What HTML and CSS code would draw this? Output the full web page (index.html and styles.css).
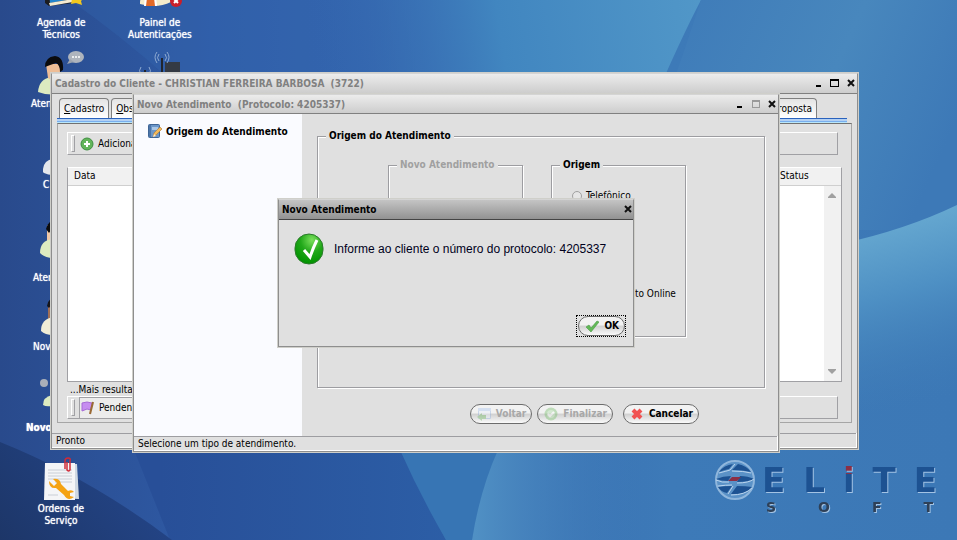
FILE: index.html
```
<!DOCTYPE html>
<html lang="pt-BR">
<head>
<meta charset="utf-8">
<title>Cadastro do Cliente</title>
<link rel="stylesheet" href="styles.css">
</head>
<body>
<svg class="wallpaper" viewBox="0 0 957 540" preserveAspectRatio="none" aria-hidden="true">
  <defs>
    <linearGradient id="base" x1="0" y1="0" x2="1" y2="0"><stop offset="0" stop-color="#294a8c"/><stop offset=".22" stop-color="#2f5ba6"/><stop offset=".42" stop-color="#3466ae"/><stop offset=".7" stop-color="#3d7ab8"/><stop offset="1" stop-color="#3c78b6"/></linearGradient>
    <linearGradient id="beam" x1="300" y1="60" x2="700" y2="0" gradientUnits="userSpaceOnUse"><stop offset="0" stop-color="#3361ad" stop-opacity="0"/><stop offset=".5" stop-color="#4186c0"/><stop offset="1" stop-color="#5197c8"/></linearGradient>
    <linearGradient id="topright" x1="690" y1="0" x2="957" y2="120" gradientUnits="userSpaceOnUse"><stop offset="0" stop-color="#3f7cb9"/><stop offset=".55" stop-color="#4887bd"/><stop offset="1" stop-color="#3d79b7"/></linearGradient>
    <linearGradient id="wave" x1="890" y1="215" x2="940" y2="400" gradientUnits="userSpaceOnUse"><stop offset="0" stop-color="#68aad1"/><stop offset=".4" stop-color="#4e90c4"/><stop offset="1" stop-color="#3e7bb6" stop-opacity="0"/></linearGradient>
    <linearGradient id="corner" x1="0" y1="540" x2="130" y2="440" gradientUnits="userSpaceOnUse"><stop offset="0" stop-color="#1d3668"/><stop offset="1" stop-color="#24468a"/></linearGradient>
    <linearGradient id="low" x1="160" y1="0" x2="450" y2="0" gradientUnits="userSpaceOnUse"><stop offset="0" stop-color="#284f98"/><stop offset="1" stop-color="#2c5ea6"/></linearGradient>
    <linearGradient id="ray" x1="475" y1="0" x2="660" y2="0" gradientUnits="userSpaceOnUse"><stop offset="0" stop-color="#5090c4"/><stop offset="1" stop-color="#3b77b5" stop-opacity="0"/></linearGradient>
  </defs>
  <rect width="957" height="540" fill="url(#base)"/>
  <path d="M70 0Q240 120 360 300H560V0Z" fill="#356bb4" opacity=".3"/>
  <path d="M300 0H701Q680 40 650 110H300Z" fill="url(#beam)"/>
  <path d="M701 0H957V230H620Q672 90 701 0Z" fill="url(#topright)"/>
  <path d="M840 244Q905 230 957 205V430H840Z" fill="url(#wave)"/>
  <path d="M130 440H420Q425 500 446 540H170Z" fill="url(#low)"/>
  <path d="M400 450H498Q480 500 472 540H446Q420 495 400 450Z" fill="#3775b4"/>
  <path d="M498 450H720V540H472Q480 490 498 450Z" fill="url(#ray)"/>
  <path d="M0 442Q90 478 172 540H0Z" fill="url(#corner)"/>
</svg>

<nav class="shortcuts" aria-label="Atalhos">
  <a class="shortcut agenda" href="#">
    <svg width="48" height="48" viewBox="0 0 48 48"><path d="M8 8h28v35l-24 3-4-3z" fill="#1c1c20"/><path d="M10 8h26v31l-23 4z" fill="#2284cd"/><path d="M12 43l24-4v3l-23 4z" fill="#f3ead2"/><path d="M39 31l3 6 6 0-4 4 1 4-6-2-5 1 1-5-4-3 6-1z" fill="#f2c81e"/></svg>
    <span>Agenda de<br>Técnicos</span></a>
  <a class="shortcut painel" href="#">
    <svg width="54" height="48" viewBox="0 0 54 48"><path d="M7 42Q9 26 20 24q18 2 18 18-14 7-31 2z" fill="#f4eccb"/><path d="M13 26h9l2 20H11z" fill="#fff"/><path d="M15 30h5l2 16h-9z" fill="#e16a28"/><circle cx="43" cy="41" r="6" fill="#c91f2b"/><path d="M41 39l4 4m0-4l-4 4" stroke="#fff" stroke-width="2"/></svg>
    <span>Painel de<br>Autenticações</span></a>
  <a class="shortcut aten-chat" href="#">
    <svg width="54" height="48" viewBox="0 0 54 48"><path d="M7 42Q8 29 20 27q14 2 15 15-14 5-28 0z" fill="#dcebc0"/><path d="M15 14h14v11q-6 8-12 3z" fill="#eebd96"/><path d="M14 17q0-10 10-11 9 1 8 14l-3 2q0-7-4-9-6 2-11 4z" fill="#0b0b0d"/><ellipse cx="45" cy="7" rx="8" ry="6" fill="#aeb4bd"/><path d="M39 9l-3 5 7-2z" fill="#9da4af"/><path d="M41 7h2m1 0h2m1 0h2" stroke="#fff" stroke-width="1.500"/></svg>
    <span>Aten</span></a>
  <a class="shortcut radio" href="#">
    <svg width="48" height="48" viewBox="0 0 48 48"><path d="M27 12h15v30H27z" fill="#343a44"/><path d="M24 8v30M7 20v20" stroke="#20252e" stroke-width="2"/><path d="M21 4q-3 4 0 7m-2-9q-4 5 0 11M27 4q3 4 0 7m2-9q4 5 0 11M3 17q-3 4 0 7m8-7q3 4 0 7" fill="none" stroke="#8eaad2"/></svg></a>
  <a class="shortcut contas" href="#">
    <svg width="24" height="24" viewBox="0 0 24 24"><path d="M0 14Q1 5 10 4v16q-5 0-9-2-2-1-1-4z" fill="#e4e7ec"/></svg>
    <span>C</span></a>
  <a class="shortcut aten" href="#">
    <svg width="30" height="48" viewBox="0 0 30 48"><path d="M14 9h14v17H14z" fill="#f1c8a7"/><path d="M13 13Q15 3 26 4v7q-7 0-10 6z" fill="#0b0b0d"/><path d="M7 37Q7 24 20 23v19q-8 0-13-5z" fill="#dcebc0"/></svg>
    <span>Aten</span></a>
  <a class="shortcut nov" href="#">
    <svg width="30" height="48" viewBox="0 0 30 48"><path d="M15 12h14v17H15z" fill="#a06f56"/><path d="M14 16Q15 7 26 6v6q-7 0-10 6z" fill="#15151a"/><path d="M8 41Q8 29 20 27v18q-8 0-12-4z" fill="#f0edd6"/></svg>
    <span>Nov</span></a>
  <a class="shortcut novo" href="#">
    <svg width="30" height="48" viewBox="0 0 30 48"><circle cx="18" cy="9" r="4" fill="#a9afb9"/><path d="M17 31q0-8 9-10v11q-6 1-9-1z" fill="#dcebc0"/></svg>
    <span>Novo</span></a>
  <a class="shortcut ordens" href="#">
    <svg width="48" height="48" viewBox="0 0 48 48"><path d="M12 8l28 1 2 35-26-1z" fill="#cfd8e2"/><path d="M8 8h30v37H7z" fill="#f4f5f7"/><path d="M11 15h24M11 18h24M11 21h24M11 24h24M18 27h17M11 40h10" stroke="#c9ced6"/><path d="M12 26l5 5 3-3-4-4q7-1 8 5l7 7q4-2 6 1l-4 1v3l4 1q-6 5-10-2l-8-7q-7 1-7-7z" fill="#f5a313"/><path d="M28 14V6q0-3 3-3t2 3v9q-1 2-3 0V7" fill="none" stroke="#d02b38" stroke-width="1.500"/></svg>
    <span>Ordens de<br>Serviço</span></a>
</nav>

<div class="brand">
  <svg class="globe" width="44" height="42" viewBox="0 0 44 42" aria-hidden="true"><circle cx="21" cy="20" r="19" fill="#5b92c7" stroke="#8fb6dc" stroke-width="2"/><path d="M5 12Q10 5 19 4l-4 5q-5 1-10 3zM18 10l6-6q9 2 13 8-8-2-19-2zM2 19q7-3 15-3l-3 5q-7 0-12-2zM26 16q8 0 14 3-6 3-17 3zM4 27q6-1 14-1l-5 7q-6-1-9-6zM17 34l6-8q9 0 15 1-6 8-21 7z" fill="#1d5292"/><path d="M5 13q8-2 11-3l5-6M18 11q12 0 19 2M2 20q6 3 13 2M23 23q12 0 17-4M4 26q8-1 14-1M17 35q14 0 21-7M14 34l5-8" fill="none" stroke="#bcd5ee"/><path d="M18 17h9l-4 4h-9z" fill="#8c2f45"/></svg>
  <div class="wordmark">
    <div class="elite"><span>E</span><span>L</span><span class="dotted">i</span><span>T</span><span>E</span></div>
    <div class="soft"><span>S</span><span>O</span><span>F</span><span>T</span></div>
  </div>
</div>

<section class="window client">
  <header class="titlebar">
    <h1>Cadastro do Cliente - CHRISTIAN FERREIRA BARBOSA  (3722)</h1>
    <div class="controls">
      <button aria-label="Minimizar"><svg width="10" height="10"><path d="M2 7h5v2H2z"/></svg></button>
      <button aria-label="Maximizar"><svg width="10" height="10"><path d="M0 1h9v8H0zM1 3v5h7V3z" fill-rule="evenodd"/></svg></button>
      <button aria-label="Fechar"><svg width="10" height="10"><path d="M2 2l6 6M8 2L2 8" stroke="#111" stroke-width="2"/></svg></button>
    </div>
  </header>
  <div class="client-body">
    <div class="tabs">
      <button class="tab"><u>C</u>adastro</button>
      <button class="tab"><u>O</u>bs</button>
      <button class="tab last">Proposta</button>
    </div>
    <div class="page">
      <div class="toolbar">
        <i class="grip"></i>
        <button class="tool"><svg width="14" height="14" viewBox="0 0 14 14"><circle cx="7" cy="7" r="6" fill="#62b55a" stroke="#3f8e42"/><path d="M7 4v6M4 7h6" stroke="#fff" stroke-width="2"/></svg>Adicionar</button>
      </div>
      <div class="list">
        <table><thead><tr><th>Data</th><th class="status">Status</th></tr></thead></table>
        <div class="scroller"><svg width="8" height="5"><path d="M4 0l4 4v1H0V4z"/></svg><svg width="8" height="5"><path d="M0 0h8v1L4 5 0 1z"/></svg></div>
      </div>
      <div class="more">...Mais resultados</div>
      <div class="toolbar">
        <i class="grip"></i>
        <button class="tool pressed"><svg width="14" height="14" viewBox="0 0 14 14"><path d="M1 2l5-1 5 1-1 7-4-1-5 2z" fill="#c68df0" stroke="#a66bd6"/><path d="M12 1L9 13" stroke="#9a6a35" stroke-width="2"/></svg>Pendentes</button>
      </div>
    </div>
  </div>
  <footer class="statusbar">Pronto</footer>
</section>

<section class="window wizard">
  <header class="titlebar">
    <h2>Novo Atendimento  (Protocolo: 4205337)</h2>
    <div class="controls">
      <button aria-label="Minimizar"><svg width="10" height="10"><path d="M2 7h5v2H2z"/></svg></button>
      <button aria-label="Maximizar" disabled><svg width="10" height="10"><path d="M1 1h8v8H1zM2 3v5h6V3z" fill="#999" fill-rule="evenodd"/></svg></button>
      <button aria-label="Fechar"><svg width="10" height="10"><path d="M2 2l6 6M8 2L2 8" stroke="#111" stroke-width="2"/></svg></button>
    </div>
  </header>
  <div class="wizard-body">
    <aside class="steps">
      <svg width="14" height="16" viewBox="0 0 14 16"><rect x=".5" y="1.500" width="11" height="13" rx="1" fill="#6b96c8" stroke="#3e6596"/><path d="M2 2v12" stroke="#2f5587"/><path d="M4 4h6v3H4z" fill="#a9c6e6"/><path d="M5 14l1-4 6-6 2 2-6 6z" fill="#f2b95a" stroke="#b57a32" stroke-width=".6"/><path d="M5 14l1-3 2 2z" fill="#f9ead0"/></svg>
      <strong>Origem do Atendimento</strong>
    </aside>
    <form class="step">
      <fieldset class="outer">
        <legend>Origem do Atendimento</legend>
        <div class="groups">
          <fieldset class="group" disabled><legend>Novo Atendimento</legend></fieldset>
          <fieldset class="group"><legend>Origem</legend>
            <div class="options">
              <label><input type="radio" name="origem">Telefônico</label>
              <label><input type="radio" name="origem">Atendimento Online</label>
            </div>
          </fieldset>
        </div>
      </fieldset>
      <div class="actions">
        <button type="button" class="pill" disabled><svg width="14" height="14" viewBox="0 0 14 14"><path d="M1.500 1.500h12v10h-12z" fill="#e8eef8" stroke="#8fb0e0"/><path d="M1 1h13v3H1z" fill="#a9c4ee"/><path d="M0 10l5-4v2h4v4H5v2z" fill="#6fb862"/></svg>Voltar</button>
        <button type="button" class="pill" disabled><svg width="14" height="14" viewBox="0 0 14 14"><circle cx="7" cy="7" r="6.500" fill="#74bd68"/><circle cx="7" cy="7" r="4" fill="#a9dba0"/><path d="M4 7l2 2 4-4" fill="none" stroke="#fff" stroke-width="2"/></svg>Finalizar</button>
        <button type="button" class="pill cancel"><svg width="14" height="14" viewBox="0 0 14 14"><path d="M3 3l8 8M11 3l-8 8" stroke="#f15252" stroke-width="4"/></svg>Cancelar</button>
      </div>
    </form>
  </div>
  <footer class="statusbar">Selecione um tipo de atendimento.</footer>
</section>

<section class="window dialog" role="dialog" aria-labelledby="dialog-title">
  <header class="titlebar">
    <h2 id="dialog-title">Novo Atendimento</h2>
    <div class="controls"><button aria-label="Fechar"><svg width="10" height="10"><path d="M2 2l6 6M8 2L2 8" stroke="#111" stroke-width="2"/></svg></button></div>
  </header>
  <div class="message">
    <svg width="30" height="32" viewBox="0 0 30 32" aria-hidden="true"><defs><radialGradient id="orb" cx=".6" cy=".2" r=".8"><stop offset="0" stop-color="#7be05c"/><stop offset=".5" stop-color="#22a81a"/><stop offset="1" stop-color="#009300"/></radialGradient></defs><rect x="1" y="1" width="28" height="30" rx="14" fill="url(#orb)" stroke="#2b7a2b"/><path d="M10 17l6 7q3-9 7-17" fill="none" stroke="#fff" stroke-width="3"/></svg>
    <p>Informe ao cliente o número do protocolo: 4205337</p>
  </div>
  <div class="confirm">
    <div class="focus"><button class="pill"><svg width="14" height="14" viewBox="0 0 14 14"><path d="M1 8l3-2 2 3 6-7 2 1-8 10z" fill="#62b957" stroke="#4a9a47" stroke-width=".6"/></svg>OK</button></div>
  </div>
</section>
</body>
</html>
```
FILE: styles.css
```
* { box-sizing: border-box; }

body {
  margin: 0;
  min-height: 100vh;
  position: relative;
  overflow: hidden;
  background: #3466ae;
  color: #000;
  font: 10px/12px "DejaVu Sans Condensed", "DejaVu Sans", sans-serif;
}

h1, h2, p { margin: 0; font-size: inherit; }
button { margin: 0; padding: 0; border: 0; background: none; color: inherit; font: inherit; }
svg { display: block; flex: none; }

.wallpaper { position: absolute; inset: 0; width: 100%; height: 100%; }

/* Desktop shortcuts */
.shortcut {
  position: absolute;
  display: flex;
  flex-direction: column;
  align-items: center;
  color: #fff;
  text-align: center;
  text-decoration: none;
  text-shadow: 0 0 1px #fff;
}
.agenda { left: 37px; top: -40px; gap: 9px; }
.painel { left: 128px; top: -40px; gap: 9px; }
.aten-chat { left: 31px; top: 50px; align-items: flex-start; }
.radio { left: 138px; top: 50px; }
.contas { left: 43px; top: 155px; align-items: flex-start; }
.aten { left: 33px; top: 216px; gap: 8px; align-items: flex-start; }
.nov { left: 33px; top: 290px; gap: 3px; align-items: flex-start; }
.novo { left: 26px; top: 374px; align-items: flex-start; }
.novo span { font-weight: bold; }
.ordens { left: 37px; top: 455px; }

/* Wallpaper logo */
.brand { position: absolute; right: 20px; bottom: 26px; display: flex; gap: 4px; }
.wordmark { width: 175px; filter: drop-shadow(1px 1px 0 #a3c3e4); font-family: "DejaVu Sans", sans-serif; font-weight: bold; }
.elite, .soft { display: flex; justify-content: space-between; }
.elite { color: #1d5292; font-size: 34px; line-height: 40px; }
.elite .dotted { background: linear-gradient(#8c2f45 36%, #1d5292 36%); background-clip: text; color: transparent; }
.soft { padding: 0 4px; color: #2e4057; font-size: 14px; line-height: 14px; }

/* Windows */
.window {
  position: absolute;
  display: flex;
  flex-direction: column;
  border: 1px solid #8e8e8e;
  border-top-color: #d4d4d4;
  outline: 1px solid #cfcfca;
  background: #e0e0e0;
}
.client { left: 51px; right: 99px; top: 73px; bottom: 91px; }
.wizard { left: 133px; right: 178px; top: 94px; bottom: 88px; }
.dialog { left: 278px; right: 323px; top: 199px; }

.titlebar {
  display: flex;
  align-items: center;
  justify-content: space-between;
  height: 20px;
  padding: 1px 1px 0 3px;
  border-bottom: 1px solid #808080;
  background: linear-gradient(#ececec, #cdcdcd);
  color: #808080;
  font-weight: bold;
  white-space: pre;
}
.wizard .titlebar { height: 19px; }
.controls { display: flex; gap: 6px; margin-bottom: 2px; }
.dialog .titlebar { padding-right: 0; border-color: #444; background: linear-gradient(#c4c4c4, #929292); color: #000; }

.statusbar { height: 15px; padding: 2px 4px; border: 1px solid #fff; border-width: 0 1px 1px 0; box-shadow: inset 0 1px #9d9da1; }

/* Customer record */
.client-body { flex: 1; display: flex; flex-direction: column; padding: 4px 5px 10px; }
.tabs {
  display: flex;
  gap: 2px;
  margin-right: 5px;
  padding: 0 30px 5px 2px;
  background: linear-gradient(to top, #b9e6fa 0 1px, #78aeee 1px 2px, #b3d0f3 2px 4px, #2a62bd 4px 5px, transparent 5px);
}
.tab { height: 20px; padding: 0 4px; border: 1px solid #808080; border-bottom: 0; border-radius: 4px 4px 0 0; background: linear-gradient(#e4e4e4, #fff); }
.tab.last { margin-left: auto; }
.page {
  flex: 1;
  display: flex;
  flex-direction: column;
  padding: 8px 9px 3px;
  border: 1px solid #a6a6a6;
  border-top-color: #707070;
}
.toolbar { display: flex; align-items: center; gap: 4px; height: 23px; margin-right: 4px; padding-left: 3px; border: 1px solid #a0a0a4; border-top-color: #fff; border-left-color: #fff; }
.grip { width: 4px; height: 17px; border: 1px solid #a0a0a4; border-left-color: #fff; border-top-color: #fff; }
.tool { display: flex; align-items: center; gap: 4px; padding: 0 1px; height: 21px; }
.pressed { border: 1px solid #a0a0a4; border-width: 1px 0 0 1px; background: #ececec; }

.list { flex: 1; display: flex; flex-direction: column; margin-top: 12px; border: 1px solid #a0a0a4; border-top-color: #fff; background: #fff; }
.list table { width: 100%; border-collapse: collapse; }
.list th { height: 17px; padding: 0 6px; border-bottom: 1px solid #cfcfcf; background: #f1f1f1; font-weight: normal; text-align: left; }
.list .status { width: 67px; }
.scroller { flex: 1; align-self: flex-end; display: flex; flex-direction: column; justify-content: space-between; width: 17px; padding: 7px 4px; background: #f1f1f1; fill: #a0a0a0; }
.more { padding: 2px 3px 0; height: 14px; }

/* Wizard */
.wizard-body { flex: 1; display: flex; }
.steps { display: flex; gap: 4px; width: 168px; padding: 9px 14px; background: #fafbff; }
.steps strong { line-height: 17px; }
.step { flex: 1; display: flex; flex-direction: column; padding: 16px 13px 12px 15px; }

fieldset { min-width: 0; margin: 0; padding: 0; border: 1px solid #9d9da1; box-shadow: 1px 1px #fff, inset 1px 1px #fff; }
legend { margin-left: 8px; padding: 0 3px; background: #e0e0e0; font-weight: bold; }
.outer { flex: 1; }
.groups { display: flex; justify-content: center; gap: 28px; padding: 17px 8px 0 0; }
.group { width: 135px; height: 178px; }
.group:disabled { color: #a0a0a0; }
.options { display: grid; gap: 84px; padding: 18px 0 0 20px; }
.options label { display: flex; align-items: center; gap: 4px; height: 14px; white-space: nowrap; }
.options input { appearance: none; flex: none; width: 10px; height: 10px; margin: 0; border: 1px solid #a0a0a0; border-radius: 50%; background: #e6e6e6; }

.actions { display: flex; justify-content: flex-end; gap: 5px; padding: 16px 66px 0 0; }
.pill {
  display: flex;
  align-items: center;
  gap: 5px;
  height: 20px;
  padding: 0 5px 0 6px;
  border: 1px solid #6c6c6c;
  border-radius: 10px;
  background: linear-gradient(#f2f2f2 0 45%, #d0d0d0 50%, #fafafa);
  font-weight: bold;
}
.cancel { margin-left: 5px; }
.pill:disabled { color: #a8a8a8; }
.pill:disabled svg { opacity: .4; }

/* Message */
.message { display: flex; align-items: center; gap: 10px; padding: 13px 15px 0; color: #00001c; font: 12px/14px "Liberation Sans", Arial, sans-serif; }
.confirm { display: flex; justify-content: flex-end; padding: 50px 7px 9px; }
.focus { padding-left: 1px; border: 1px dotted #000; }
```
